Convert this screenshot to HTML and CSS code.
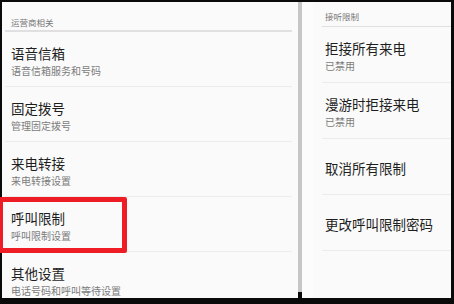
FILE: index.html
```html
<!DOCTYPE html>
<html lang="zh-CN">
<head>
  <meta charset="UTF-8">
  <title>通话设置</title>
  <link rel="stylesheet" href="styles.css">
</head>
<body>
  <div class="screen">
    <!-- 左侧：运营商相关 -->
    <section class="panel panel-left">
      <div class="group-title">运营商相关</div>
      <div class="item">
        <div class="item-title">语音信箱</div>
        <div class="item-sub">语音信箱服务和号码</div>
      </div>
      <div class="item">
        <div class="item-title">固定拨号</div>
        <div class="item-sub">管理固定拨号</div>
      </div>
      <div class="item">
        <div class="item-title">来电转接</div>
        <div class="item-sub">来电转接设置</div>
      </div>
      <div class="item">
        <div class="item-title">呼叫限制</div>
        <div class="item-sub">呼叫限制设置</div>
      </div>
      <div class="item">
        <div class="item-title">其他设置</div>
        <div class="item-sub">电话号码和呼叫等待设置</div>
      </div>
    </section>

    <div class="scrollbar"></div>

    <!-- 右侧：接听限制 -->
    <section class="panel panel-right">
      <div class="group-title">接听限制</div>
      <div class="item">
        <div class="item-title">拒接所有来电</div>
        <div class="item-sub">已禁用</div>
      </div>
      <div class="item">
        <div class="item-title">漫游时拒接来电</div>
        <div class="item-sub">已禁用</div>
      </div>
      <div class="item item-single">
        <div class="item-title">取消所有限制</div>
      </div>
      <div class="item item-single">
        <div class="item-title">更改呼叫限制密码</div>
      </div>
    </section>

    <!-- 标注框 -->
    <div class="highlight"></div>
  </div>
</body>
</html>
```

FILE: styles.css
```css
:root {
  --bg: #fafafa;
  --title: #1e1e1e;
  --sub: #7c7c7c;
  --group: #777;
  --line: #ececec;
  --line-strong: #e0e0e0;
  --mark: #ee1c25;
  --font: "Noto Sans CJK SC", "Noto Sans", sans-serif;
}
* {
  box-sizing: border-box;
}
html, body {
  margin: 0;
  height: 100%;
  background: #0a0a0a;
}
body {
  font-family: var(--font);
  overflow: hidden;
}
.screen {
  position: relative;
  width: 454px;
  height: 304px;
  padding: 2px 3px 6px 2px;
  display: flex;
  overflow: hidden;
}
.panel {
  background: var(--bg);
  height: 296px;
  overflow: hidden;
}
.panel-left {
  width: 296px;
}
.panel-right {
  flex: 1;
}
.scrollbar {
  width: 4px;
  height: 290px;
  background: #c6c6c6;
}
/* промежуток между панелями */
.scrollbar + .panel {
  border-left: 11px solid #fcfcfc;
}
.group-title {
  font-size: 8.5px;
  color: var(--group);
  line-height: 20px;
}
.panel-left .group-title {
  height: 30px;
  padding: 10px 0 0 6px;
  margin: 0 6px 0 3px;
  border-bottom: 2px solid var(--line-strong);
}
.panel-right .group-title {
  height: 25px;
  padding: 4px 0 0 3px;
  margin-left: 9px;
  border-bottom: 1.5px solid var(--line-strong);
}
.item {
  height: 56px;
  padding-top: 12px;
  border-bottom: 1px solid var(--line);
}
.panel-left .item {
  height: 55px;
  margin: 0 6px 0 3px;
  padding-left: 6px;
}
.panel-right .item {
  margin-left: 9px;
  padding-left: 3px;
}
.item-title {
  font-size: 13.5px;
  line-height: 19px;
  color: var(--title);
}
.item-sub {
  font-size: 10px;
  line-height: 15px;
  color: var(--sub);
}
.item-single {
  padding-top: 0;
  display: flex;
  align-items: center;
}
.item-single .item-title {
  margin-top: 3px;
}
.highlight {
  position: absolute;
  left: -2px;
  top: 197px;
  width: 129px;
  height: 56px;
  border: 5px solid var(--mark);
  border-radius: 2px;
}
```
